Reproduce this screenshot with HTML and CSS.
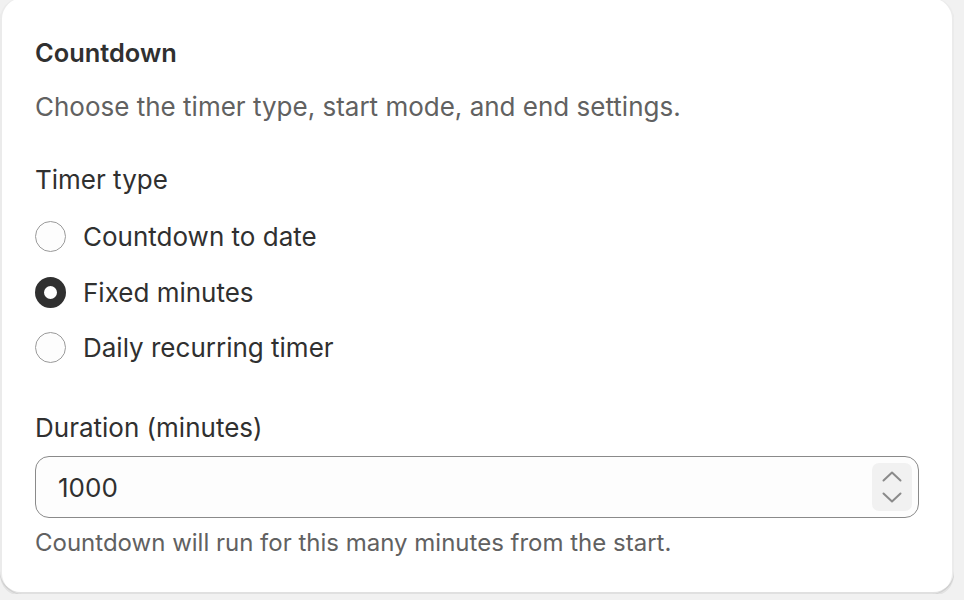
FILE: index.html
```html
<!DOCTYPE html>
<html lang="en">
<head>
    <meta charset="UTF-8">
    <meta name="viewport" content="width=device-width, initial-scale=1.0">
    <title>Countdown settings</title>
    <link rel="stylesheet" href="styles.css">
</head>
<body>

    <div class="card">
        <h2 class="card-title">Countdown</h2>
        <p class="card-desc">Choose the timer type, start mode, and end settings.</p>

        <div class="choice-group">
            <div class="field-label">Timer type</div>
            <div class="choice-list">
                <label class="choice">
                    <input type="radio" name="timerType" value="date">
                    <span class="radio"></span>
                    <span class="choice-label">Countdown to date</span>
                </label>
                <label class="choice">
                    <input type="radio" name="timerType" value="fixed" checked>
                    <span class="radio"></span>
                    <span class="choice-label">Fixed minutes</span>
                </label>
                <label class="choice">
                    <input type="radio" name="timerType" value="daily">
                    <span class="radio"></span>
                    <span class="choice-label">Daily recurring timer</span>
                </label>
            </div>
        </div>

        <div class="text-field">
            <label class="field-label" for="duration">Duration (minutes)</label>
            <div class="input-wrap">
                <input class="input" id="duration" type="text" value="1000">
                <div class="spinner">
                    <svg width="20" height="11" viewBox="0 0 20 11"><path d="M1.5 9.5 L10 1.5 L18.5 9.5" fill="none" stroke="#8a8a8a" stroke-width="2" stroke-linecap="round" stroke-linejoin="round"/></svg>
                    <svg width="20" height="11" viewBox="0 0 20 11"><path d="M1.5 1.5 L10 9.5 L18.5 1.5" fill="none" stroke="#8a8a8a" stroke-width="2" stroke-linecap="round" stroke-linejoin="round"/></svg>
                </div>
            </div>
            <p class="help-text">Countdown will run for this many minutes from the start.</p>
        </div>
    </div>

</body>
</html>
```

FILE: styles.css
```css
body {
    margin: 0;
    padding: 0 10px 0 0;
    background-color: #f1f1f1;
    font-family: Inter, 'Noto Sans', sans-serif;
    color: #303030;
    overflow: hidden;
}

.card {
    margin-top: -2px;
    padding: 37px 35px 34px;
    background-color: #ffffff;
    border-radius: 21px;
    box-shadow: 0 2px 0 rgba(26, 26, 26, 0.07),
                inset 0 -2px 0 rgba(0, 0, 0, 0.12),
                inset 2px 0 0 rgba(0, 0, 0, 0.08),
                inset -2px 0 0 rgba(0, 0, 0, 0.08);
}

.card-title {
    margin: 0;
    font-size: 25.4px;
    line-height: 35px;
    font-weight: 600;
}

.card-desc {
    margin: 19px 0 0;
    font-size: 26px;
    line-height: 35px;
    color: #616161;
}

/* Timer type */
.choice-group {
    margin-top: 38px;
}

.field-label {
    display: block;
    font-size: 26px;
    line-height: 35px;
}

.choice-list {
    margin-top: 22px;
    display: flex;
    flex-direction: column;
    gap: 20.5px;
}

.choice {
    display: flex;
    align-items: center;
    gap: 17px;
    height: 35px;
    cursor: pointer;
}

.choice input {
    display: none;
}

.radio {
    width: 31px;
    height: 31px;
    box-sizing: border-box;
    border-radius: 50%;
    border: 1.3px solid #9a9a9a;
    background-color: #fdfdfd;
}

.choice input:checked + .radio {
    border: 9px solid #303030;
    background-color: #ffffff;
}

.choice-label {
    font-size: 26px;
    line-height: 35px;
}

/* Duration */
.text-field {
    margin-top: 45px;
}

.text-field .field-label {
    margin-bottom: 11px;
}

.input-wrap {
    display: flex;
    align-items: center;
    height: 62px;
    box-sizing: border-box;
    padding: 0 6px 0 22px;
    border: 1.3px solid #8a8a8a;
    border-radius: 14px;
    background-color: #fdfdfd;
}

.input {
    flex: 1;
    min-width: 0;
    border: 0;
    outline: none;
    padding: 0;
    background: transparent;
    font-family: inherit;
    font-size: 26px;
    color: #303030;
}

.spinner {
    width: 40px;
    height: 48px;
    border-radius: 7px;
    background-color: #f1f1f1;
    display: flex;
    flex-direction: column;
    align-items: center;
    justify-content: center;
    gap: 10px;
}

.spinner svg {
    display: block;
}

.help-text {
    margin: 7px 0 0;
    font-size: 24px;
    line-height: 35px;
    color: #616161;
}
```
